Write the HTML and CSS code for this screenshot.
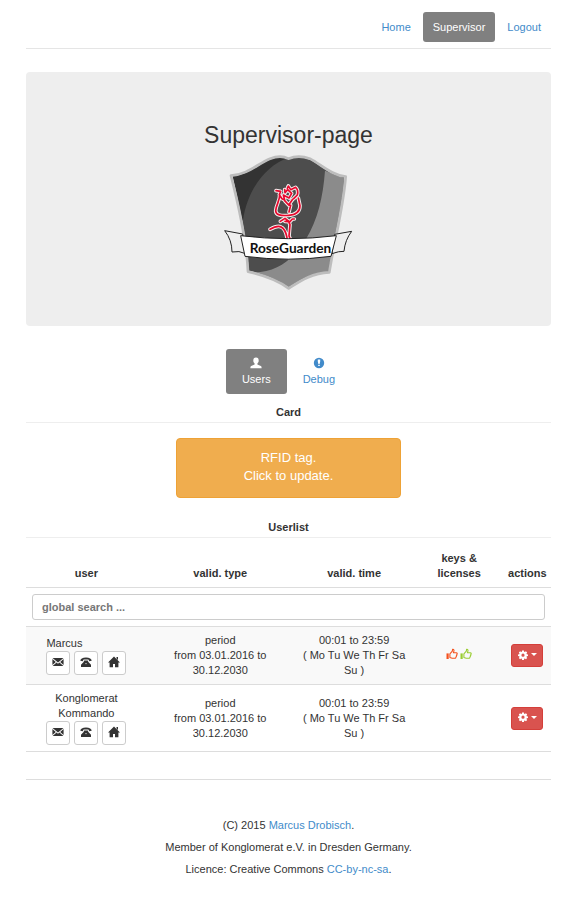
FILE: index.html
```html
<!DOCTYPE html>
<html lang="en">
<head>
<meta charset="utf-8">
<meta name="viewport" content="width=device-width, initial-scale=1">
<title>RoseGuarden</title>
<link rel="stylesheet" href="styles.css">
</head>
<body>
<svg class="sprite" aria-hidden="true">
  <symbol id="mail" viewBox="0 0 12 12"><path d="M.5 2h11L6 6.600zM.4 3.100 3.800 6 .4 9zM11.600 3.100 8.200 6l3.400 3zM4.600 6.600 6 7.800l1.400-1.200L11.400 10H.6z"/></symbol>
  <symbol id="phone" viewBox="0 0 12 12"><path d="M.3 4.800C.3 2.800 2.500 1.500 6 1.500S11.700 2.800 11.700 4.800L9.300 5.200 8.400 3.500H3.600L2.700 5.200zM4.200 4.500h3.600l.6 1.600 2.600 2.700V11H1V8.800l2.600-2.700z"/><circle cx="6" cy="7.600" r=".6" fill="#fff"/></symbol>
  <symbol id="home" viewBox="0 0 12 12"><path d="M6 .5 12 6.600h-1.600V11.300H7V8H5v3.300H1.600V6.600H0zM8.500 1.100H10v3L8.500 2.600z"/></symbol>
  <symbol id="user" viewBox="0 0 12 12"><path d="M6 .6c1.900 0 2.700 1.200 2.700 2.900 0 1.300-.5 2.300-1.300 2.900v1.100l3.400 1.500c.6.300.8.800.8 2.200H.4c0-1.400.2-1.900.8-2.200l3.400-1.500V6.400C3.800 5.800 3.300 4.800 3.300 3.500 3.300 1.800 4.100.6 6 .6z"/></symbol>
  <symbol id="alert" viewBox="0 0 12 12"><circle cx="6" cy="6" r="5.200"/><path fill="#fff" d="M4.800 2.600h2.400v2L6.600 7H5.400l-.6-2.400zM5.200 7.700h1.600v1.400H5.200z"/></symbol>
  <symbol id="gear" viewBox="0 0 12 12"><path fill-rule="evenodd" d="M4.900.5h2.200l.3 1.500.8.300 1.300-.8L11 3l-.8 1.200.3.800 1.500.3v1.900l-1.500.3-.3.800.8 1.200-1.500 1.500-1.300-.8-.8.300-.3 1.500H4.900l-.3-1.500-.8-.3-1.300.8L1 9.500l.8-1.200-.3-.8L0 7.200V5.300L1.500 5l.3-.8L1 3l1.500-1.500 1.300.8.800-.3zM6 4.300a1.900 1.900 0 1 0 0 3.800 1.900 1.900 0 0 0 0-3.800z"/></symbol>
  <symbol id="thumb" viewBox="0 0 12 12"><path d="M.5 5.400h2.200V11H.5z"/><path fill="none" stroke="currentColor" stroke-width="1.100" stroke-linejoin="round" d="M3.900 5.800 6.300 3.200l.3-1.900c1.100-.3 1.600.7 1.300 1.800l-.5 1.600h2.800c1.200 0 1.300 1.200.5 1.500.5.600.2 1.200-.3 1.400.3.600 0 1.100-.5 1.300.2.900-.3 1.400-1.200 1.400H6.200L3.900 9.500z"/></symbol>
</svg>
<div class="page">
  <header class="topbar">
    <nav class="nav">
      <a class="nav-link" href="#">Home</a>
      <a class="nav-link active" href="#">Supervisor</a>
      <a class="nav-link" href="#">Logout</a>
    </nav>
  </header>

  <main>
    <section class="hero">
      <h1>Supervisor-page</h1>
      <svg class="logo" viewBox="0 24 471 414" role="img" aria-label="RoseGuarden crest">
        <defs>
          <clipPath id="shield"><path d="M68 93C115 91 143 60 180 44Q212 31 235 43Q266 31 300 44C335 63 366 94 403 96C396 190 370 280 356 380C305 381 269 405 236 426C206 404 164 387 116 377C112 290 91 190 68 93z"/></clipPath>
          <path id="rose" d="M198 137 212 139 208 149 216 161 224 165 220 150 237 159 245 145 233 134 225 143 224 134M232 130 235 123 242 134 257 127Q266 135 262 150L251 161M209 149C210 168 198 178 197 198C198 210 212 213 236 211C258 209 270 199 270 182L265 159M224 167 236 180 248 163M236 180 242 181 237 201M211 229 225 220 239 231 247 222 253 222M225 229 236 230 240 239 237 273 242 285M180 253C206 238 224 240 231 278"/>
        </defs>
        <g clip-path="url(#shield)">
          <path fill="#4d4d4d" d="M50 20h370v420H50z"/>
          <path fill="#333" d="M50 20h185V38C170 60 113 130 99 225L50 260z"/>
          <path fill="#8b8b8b" d="M345 77 430 110V450H100V379C190 393 246 350 288 282C323 224 339 157 345 77z"/>
        </g>
        <path fill="none" stroke="#bdbdbd" stroke-width="8" stroke-linejoin="round" d="M63 92C115 88 143 56 180 41Q212 29 235 41Q266 29 300 41C335 60 366 91 407 95C400 190 374 280 358 382C305 384 269 409 236 430C206 408 164 391 114 380C110 290 88 190 63 92z"/>
        <g fill="none" stroke-linecap="round" stroke-linejoin="round">
          <use href="#rose" stroke="#f5eeee" stroke-width="11"/>
          <use href="#rose" stroke="#e8082d" stroke-width="5"/>
        </g>
        <g stroke="#222" stroke-width="3" stroke-linejoin="round">
          <path fill="#eee" d="M44 257 98 267 107 326Q87 316 66 321Q66 285 44 257zM374 268 425 259Q405 285 402 319 387 318 366 326z"/>
          <path fill="#fff" d="M92 272Q235 290 379 272L363 334Q236 351 105 334z"/>
        </g>
        <text class="logo-text" x="119" y="325">RoseGuarden</text>
      </svg>
    </section>

    <nav class="tabs">
      <a class="tab active" href="#"><svg class="icon"><use href="#user"/></svg>Users</a>
      <a class="tab" href="#"><svg class="icon"><use href="#alert"/></svg>Debug</a>
    </nav>

    <h2>Card</h2>
    <button class="card-button" type="button">RFID tag.<br>Click to update.</button>

    <h2>Userlist</h2>
    <table class="users">
      <colgroup><col class="c-user"><col class="c-type"><col class="c-time"><col class="c-keys"><col class="c-actions"></colgroup>
      <thead>
        <tr><th scope="col">user</th><th scope="col">valid. type</th><th scope="col">valid. time</th><th scope="col">keys &amp; licenses</th><th scope="col">actions</th></tr>
        <tr><td colspan="5"><input class="search" type="search" placeholder="global search ..." aria-label="global search"></td></tr>
      </thead>
      <tbody>
        <tr class="striped">
          <td><div class="person">
            <span class="name short">Marcus</span>
            <div class="contacts">
              <button type="button" aria-label="Mail"><svg class="icon"><use href="#mail"/></svg></button>
              <button type="button" aria-label="Phone"><svg class="icon"><use href="#phone"/></svg></button>
              <button type="button" aria-label="Address"><svg class="icon"><use href="#home"/></svg></button>
            </div>
          </div></td>
          <td>period<br>from 03.01.2016 to 30.12.2030</td>
          <td>00:01 to 23:59<br>( Mo Tu We Th Fr Sa Su )</td>
          <td><div class="keys"><svg class="icon denied"><use href="#thumb"/></svg><svg class="icon granted"><use href="#thumb"/></svg></div></td>
          <td><button class="action" type="button" aria-label="Actions"><svg class="icon"><use href="#gear"/></svg><span class="caret"></span></button></td>
        </tr>
        <tr>
          <td><div class="person">
            <span class="name">Konglomerat Kommando</span>
            <div class="contacts">
              <button type="button" aria-label="Mail"><svg class="icon"><use href="#mail"/></svg></button>
              <button type="button" aria-label="Phone"><svg class="icon"><use href="#phone"/></svg></button>
              <button type="button" aria-label="Address"><svg class="icon"><use href="#home"/></svg></button>
            </div>
          </div></td>
          <td>period<br>from 03.01.2016 to 30.12.2030</td>
          <td>00:01 to 23:59<br>( Mo Tu We Th Fr Sa Su )</td>
          <td></td>
          <td><button class="action" type="button" aria-label="Actions"><svg class="icon"><use href="#gear"/></svg><span class="caret"></span></button></td>
        </tr>
      </tbody>
    </table>
  </main>

  <footer>
    <p>(C) 2015 <a href="#">Marcus Drobisch</a>.</p>
    <p>Member of Konglomerat e.V. in Dresden Germany.</p>
    <p>Licence: Creative Commons <a href="#">CC-by-nc-sa</a>.</p>
  </footer>
</div>
</body>
</html>
```
FILE: styles.css
```css
* { box-sizing: border-box; }

body {
  margin: 0;
  background: #fff;
  color: #333;
  font: 11px/15px "Liberation Sans", Arial, sans-serif;
}

a { color: #428bca; text-decoration: none; }
button, input { font: inherit; }
.sprite { position: absolute; width: 0; height: 0; }
.icon { display: block; width: 12px; height: 12px; fill: currentColor; }

.page { padding: 12px 21px 24px 26px; }

.topbar { padding-bottom: 6px; border-bottom: 1px solid #e5e5e5; }
.nav { display: flex; justify-content: flex-end; gap: 2px; }
.nav-link { padding: 8px 10px 7px; border-radius: 3px; }
.nav-link.active, .tab.active { background: #808080; color: #fff; }

.hero {
  display: flex;
  flex-direction: column;
  align-items: center;
  margin: 23px 0;
  padding: 50px 12px 35px;
  border-radius: 4px;
  background: #eee;
}
h1 { margin: 0 0 5px; font-size: 23px; font-weight: 400; line-height: 26px; }
.logo { display: block; width: 157px; height: 138px; }
.logo-text { font: 700 41px "Lato", sans-serif; fill: #111; }

.tabs { display: flex; justify-content: center; }
.tab {
  display: flex;
  flex-direction: column;
  align-items: center;
  gap: 3px;
  padding: 8px 16px 7px;
  border-radius: 3px;
}

h2 {
  margin: 11px 0 15px;
  padding-bottom: 2px;
  border-bottom: 1px solid #eee;
  font-size: 11px;
  line-height: 15px;
  text-align: center;
}
.card-button {
  display: block;
  width: 225px;
  margin: 0 auto 22px;
  padding: 10px 11px 12px;
  border: 1px solid #eea236;
  border-radius: 4px;
  background: #f0ad4e;
  color: #fff;
  font-size: 13px;
  line-height: 18px;
}

.users {
  width: 100%;
  margin-top: -8px;
  border-bottom: 1px solid #ddd;
  border-collapse: separate;
  border-spacing: 0;
  table-layout: fixed;
  text-align: center;
}
.c-user { width: 23%; }
.c-type { width: 28%; }
.c-time { width: 23%; }
.c-keys { width: 17%; }
.c-actions { width: 9%; }
th { padding: 6px; vertical-align: bottom; }
th:last-child { padding: 6px 0; }
td { padding: 6px; border-top: 1px solid #ddd; }
.users tbody td:first-child, .users tbody td:last-child { padding: 6px 0; }
.striped { background: #f9f9f9; }

.search {
  display: block;
  width: 100%;
  height: 26px;
  padding: 0 9px;
  border: 1px solid #ccc;
  border-radius: 3px;
  background: #fff;
  font-weight: 700;
  appearance: none;
}
.search::placeholder { color: #777; opacity: 1; }

.person { width: 80px; margin: 0 auto; }
.name { display: block; }
.name.short { text-align: left; }
.contacts { display: flex; justify-content: center; gap: 4px; }
.contacts button {
  display: grid;
  place-items: center;
  width: 24px;
  height: 24px;
  padding: 0 0 2px;
  border: 1px solid #ccc;
  border-radius: 3px;
  background: #fff;
  color: #333;
}
.keys { display: flex; justify-content: center; gap: 2px; padding-bottom: 4px; }
.denied { color: #f4511e; }
.granted { color: #9acd32; }

.action {
  display: inline-flex;
  align-items: center;
  justify-content: center;
  gap: 3px;
  width: 32px;
  height: 23px;
  padding: 0 0 2px;
  border: 1px solid #d43f3a;
  border-radius: 3px;
  background: #d9534f;
  color: #fff;
  vertical-align: middle;
}
.action .icon { width: 10px; height: 10px; }
.caret { border: 3px solid transparent; border-top-color: #fff; border-bottom: 0; }

footer { margin-top: 27px; padding-top: 38px; border-top: 1px solid #ddd; text-align: center; }
footer p { margin: 0 0 7px; }
```
